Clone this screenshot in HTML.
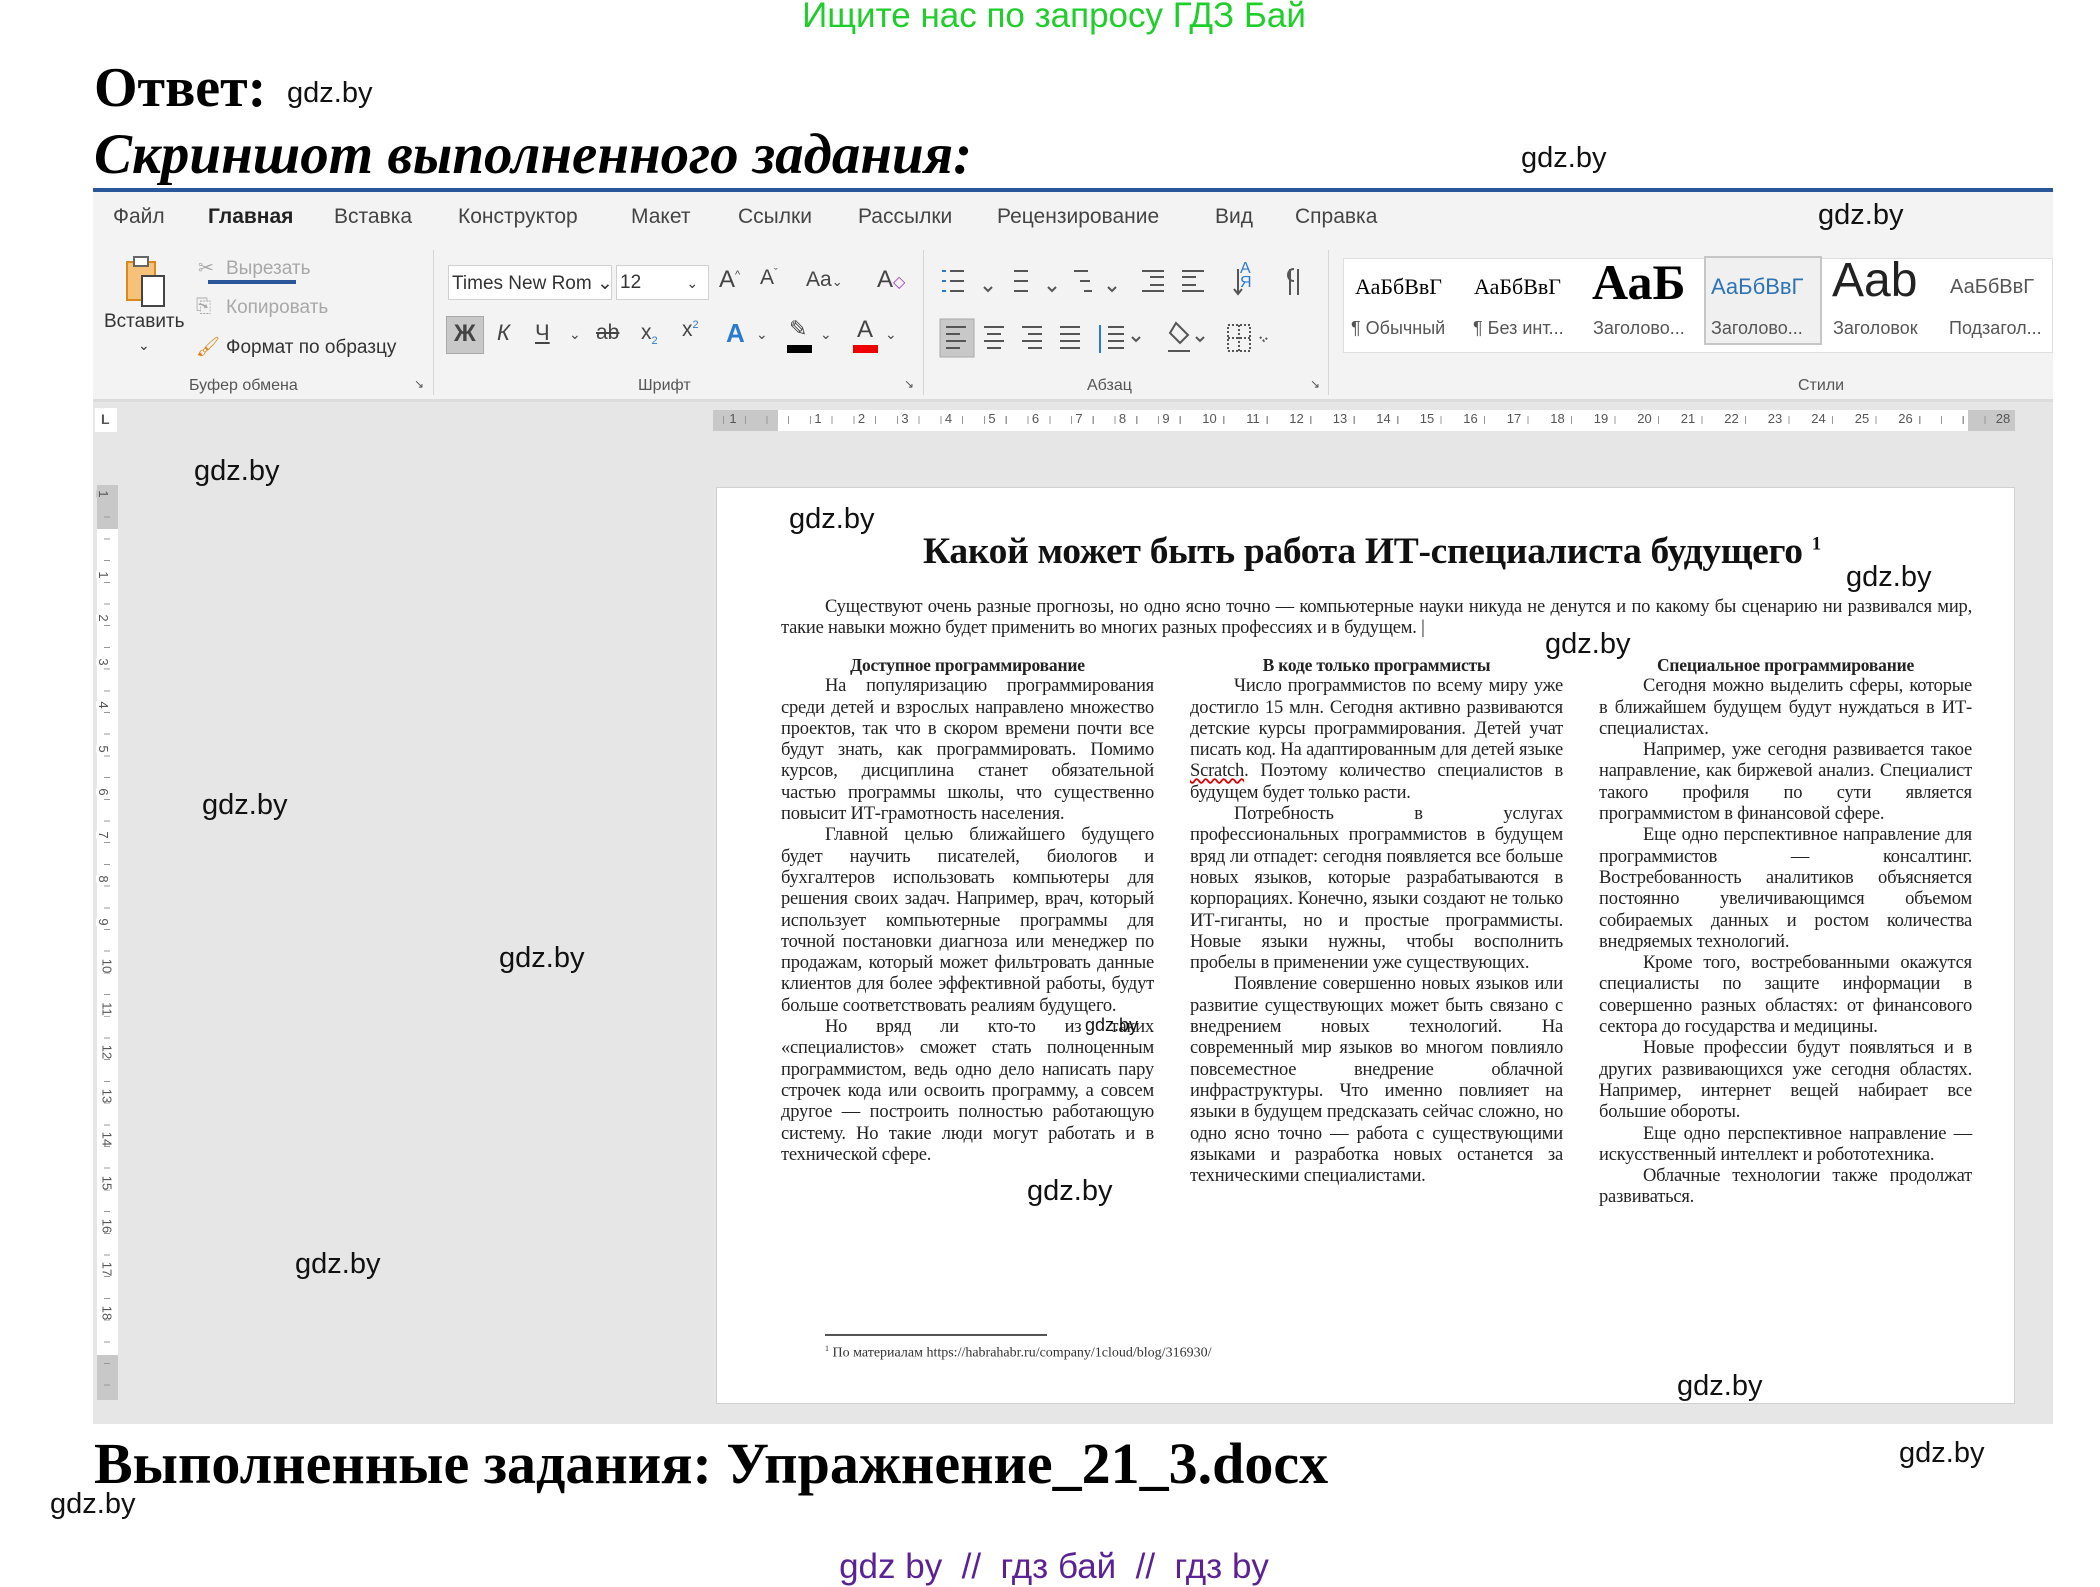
<!DOCTYPE html>
<html><head><meta charset="utf-8"><style>
*{margin:0;padding:0;box-sizing:border-box}
body{width:2100px;height:1583px;background:#fff;position:relative;overflow:hidden;font-family:"Liberation Sans","DejaVu Sans",sans-serif}
.a{position:absolute;white-space:nowrap}
.wm{position:absolute;font-family:"Liberation Sans",sans-serif;font-size:29px;color:#111;white-space:nowrap}
.serif{font-family:"Liberation Serif","DejaVu Serif",serif}
.tab{position:absolute;top:205px;font-size:21px;color:#444}
.rb{font-size:19px;color:#333}
.grey{color:#a8a8a8}
.gl{position:absolute;top:377px;font-size:16px;color:#555}
.sep{position:absolute;top:250px;width:1px;height:145px;background:#d6d6d6}
.col{position:absolute;top:655px;width:373px;font-family:"Liberation Serif",serif;font-size:18.5px;line-height:21.3px;text-align:justify;color:#222;letter-spacing:-0.2px}
.col h4{text-align:center;font-weight:bold;font-size:17.5px}
.col p{text-indent:44px}
.ic{position:absolute;font-size:24px;color:#444}
.rn{position:absolute;top:411px;font-size:13px;color:#555;transform:translateX(-50%)}
.vn{position:absolute;left:100px;font-size:13px;color:#555;transform:translateY(-50%) rotate(90deg)}
</style></head><body>

<div class="a" style="left:0;width:2108px;top:-4px;text-align:center;font-size:35px;color:#1fce2b">Ищите нас по запросу ГДЗ Бай</div>
<div class="a serif" style="left:94px;top:56px;font-size:56px;font-weight:bold">Ответ:</div>
<div class="wm" style="left:287px;top:77px">gdz.by</div>
<div class="a serif" style="left:94px;top:122px;font-size:57px;font-weight:bold;font-style:italic">Скриншот выполненного задания:</div>
<div class="wm" style="left:1521px;top:142px">gdz.by</div>

<div class="a" style="left:93px;top:188px;width:1960px;height:4px;background:#2b579a"></div>
<div class="a" style="left:93px;top:192px;width:1960px;height:209px;background:#f3f3f3"></div>
<div class="a" style="left:93px;top:399px;width:1960px;height:3px;background:#dcdcdc"></div>
<div class="a" style="left:93px;top:402px;width:1960px;height:1022px;background:#e6e6e6"></div>

<div class="tab" style="left:113px">Файл</div>
<div class="tab" style="left:208px;font-weight:bold;color:#222">Главная</div>
<div class="a" style="left:208px;top:280px;width:88px;height:4px;background:#2b579a"></div>
<div class="tab" style="left:334px">Вставка</div>
<div class="tab" style="left:458px">Конструктор</div>
<div class="tab" style="left:631px">Макет</div>
<div class="tab" style="left:738px">Ссылки</div>
<div class="tab" style="left:858px">Рассылки</div>
<div class="tab" style="left:997px">Рецензирование</div>
<div class="tab" style="left:1215px">Вид</div>
<div class="tab" style="left:1295px">Справка</div>
<div class="wm" style="left:1818px;top:199px">gdz.by</div>

<svg class="a" style="left:124px;top:254px" width="50" height="58"><rect x="3" y="8" width="28" height="38" fill="#f6c27a" stroke="#d88a1a" stroke-width="2"/><rect x="10" y="3" width="14" height="9" fill="#fff" stroke="#666" stroke-width="2"/><rect x="18" y="22" width="22" height="30" fill="#fff" stroke="#444" stroke-width="2"/></svg>
<div class="a rb" style="left:104px;top:311px">Вставить</div>
<div class="a rb" style="left:138px;top:337px;font-size:14px">⌄</div>
<div class="a rb grey" style="left:198px;top:257px">✂</div>
<div class="a rb grey" style="left:226px;top:258px">Вырезать</div>
<div class="a rb grey" style="left:196px;top:296px">⎘</div>
<div class="a rb grey" style="left:226px;top:297px">Копировать</div>
<div class="a rb" style="left:196px;top:335px;color:#d8861a">🖌</div>
<div class="a rb" style="left:226px;top:337px">Формат по образцу</div>
<div class="gl" style="left:189px">Буфер обмена</div>
<div class="gl" style="left:414px;font-size:12px">↘</div>
<div class="sep" style="left:433px"></div>

<div class="a" style="left:448px;top:265px;width:164px;height:35px;background:#fff;border:1px solid #d0d0d0;font-size:19px;padding:6px 3px;color:#333">Times New Rom ⌄</div>
<div class="a" style="left:616px;top:265px;width:93px;height:35px;background:#fff;border:1px solid #d0d0d0;font-size:19px;padding:6px 3px;color:#333">12 <span style="margin-left:40px;font-size:14px">⌄</span></div>
<div class="ic" style="left:719px;top:266px">A<sup style="font-size:11px">^</sup></div>
<div class="ic" style="left:760px;top:266px;font-size:21px">A<sup style="font-size:11px">ˇ</sup></div>
<div class="ic" style="left:806px;top:268px;font-size:21px">Aa<span style="font-size:13px">⌄</span></div>
<div class="ic" style="left:877px;top:266px">A<span style="color:#a23cc4;font-size:16px">◇</span></div>
<div class="a" style="left:446px;top:316px;width:38px;height:38px;background:#c8c8c8;border:1px solid #a8a8a8"></div>
<div class="ic" style="left:454px;top:320px;font-weight:bold">Ж</div>
<div class="ic" style="left:497px;top:320px;font-style:italic;font-size:22px">К</div>
<div class="ic" style="left:535px;top:320px;font-size:22px;text-decoration:underline">Ч</div>
<div class="ic" style="left:569px;top:326px;font-size:14px">⌄</div>
<div class="ic" style="left:596px;top:321px;font-size:21px;text-decoration:line-through">ab</div>
<div class="ic" style="left:641px;top:321px;font-size:21px">x<sub style="font-size:11px;color:#2a7bd0">2</sub></div>
<div class="ic" style="left:682px;top:318px;font-size:21px">x<sup style="font-size:11px;color:#2a7bd0">2</sup></div>
<div class="ic" style="left:726px;top:318px;color:#2a7bd0;font-weight:bold;font-size:26px">A</div>
<div class="ic" style="left:756px;top:326px;font-size:14px">⌄</div>
<div class="ic" style="left:789px;top:316px;font-size:22px">✎</div>
<div class="a" style="left:787px;top:345px;width:25px;height:8px;background:#000"></div>
<div class="ic" style="left:820px;top:326px;font-size:14px">⌄</div>
<div class="ic" style="left:857px;top:316px;font-size:24px">A</div>
<div class="a" style="left:853px;top:345px;width:25px;height:8px;background:#e00"></div>
<div class="ic" style="left:885px;top:326px;font-size:14px">⌄</div>
<div class="gl" style="left:638px">Шрифт</div>
<div class="gl" style="left:904px;font-size:12px">↘</div>
<div class="sep" style="left:923px"></div>

<svg class="a" style="left:938px;top:265px" width="380" height="95" fill="none" stroke="#555" stroke-width="2">
<g stroke="#2a7bd0"><path d="M4 6h4M4 16h4M4 26h4"/></g><path d="M12 6h14M12 16h14M12 26h14"/>
<path d="M46 22l4 4 4-4M76 6h14M76 16h14M76 26h14M110 22l4 4 4-4M136 6h14M142 16h10M146 26h8M170 22l4 4 4-4"/>
<path d="M204 6h22M212 12h14M212 20h14M204 26h22M244 6h22M244 12h14M244 20h14M244 26h22"/>
<path d="M300 4v24M296 24l4 5 4-5"/><path d="M352 4v26M360 4v26M356 4c-8 0-8 12 0 12"/>
<rect x="2" y="54" width="34" height="38" fill="#c8c8c8" stroke="#a8a8a8" stroke-width="1"/>
<path d="M8 62h20M8 69h14M8 76h20M8 83h14M46 62h20M49 69h14M46 76h20M49 83h14M84 62h20M90 69h14M84 76h20M90 83h14M122 62h20M122 69h20M122 76h20M122 83h20"/>
<path d="M162 60v28" stroke="#2a7bd0"/><path d="M170 62h16M170 69h16M170 76h16M170 83h16M194 72l4 4 4-4"/>
<path d="M238 58l12 12-8 8-10-10zM230 86h22M258 72l4 4 4-4"/>
<path d="M290 60h22v26h-22zM301 60v26M290 73h22M322 72l4 4 4-4" stroke-dasharray="2 2"/>
</svg>
<div class="ic" style="left:1240px;top:262px;font-size:16px;line-height:14px;color:#2a7bd0">А<br>Я</div>
<div class="gl" style="left:1087px">Абзац</div>
<div class="gl" style="left:1310px;font-size:12px">↘</div>
<div class="sep" style="left:1328px"></div>

<div class="a" style="left:1343px;top:258px;width:710px;height:95px;background:#fff;border:1px solid #dedede"></div>
<div class="a" style="left:1704px;top:256px;width:118px;height:89px;border:2px solid #c6c6c6;background:#f0f0f0"></div>
<div class="a serif" style="left:1355px;top:274px;font-size:22px">АаБбВвГ</div>
<div class="a serif" style="left:1474px;top:274px;font-size:22px">АаБбВвГ</div>
<div class="a serif" style="left:1592px;top:253px;font-size:50px;font-weight:bold">АаБ</div>
<div class="a" style="left:1711px;top:274px;font-size:22px;color:#2e74b5">АаБбВвГ</div>
<div class="a" style="left:1832px;top:253px;font-size:48px;color:#222">Aab</div>
<div class="a" style="left:1950px;top:276px;font-size:20px;color:#555">АаБбВвГ</div>
<div class="a" style="left:1351px;top:318px;font-size:18px;color:#555">¶ Обычный</div>
<div class="a" style="left:1473px;top:318px;font-size:18px;color:#555">¶ Без инт...</div>
<div class="a" style="left:1593px;top:318px;font-size:18px;color:#555">Заголово...</div>
<div class="a" style="left:1711px;top:318px;font-size:18px;color:#555">Заголово...</div>
<div class="a" style="left:1833px;top:318px;font-size:18px;color:#555">Заголовок</div>
<div class="a" style="left:1949px;top:318px;font-size:18px;color:#555">Подзагол...</div>
<div class="gl" style="left:1798px">Стили</div>

<div class="a" style="left:95px;top:408px;width:22px;height:24px;background:#fff;font-size:14px;font-weight:bold;color:#555;padding:3px 6px">L</div>
<div class="a" style="left:713px;top:410px;width:1302px;height:21px;background:#c8c8c8"></div>
<div class="a" style="left:778px;top:410px;width:1190px;height:21px;background:#fff"></div>
<div class="a" style="left:713px;top:416px;width:1302px;height:8px;background:repeating-linear-gradient(90deg,transparent 0 10px,#999 10px 11px,transparent 11px 21.75px)"></div>
<div id="hr"></div>
<div class="a" style="left:97px;top:485px;width:21px;height:915px;background:#fff"></div>
<div class="a" style="left:97px;top:485px;width:21px;height:44px;background:#c8c8c8"></div>
<div class="a" style="left:97px;top:1355px;width:21px;height:45px;background:#c8c8c8"></div>
<div class="a" style="left:104px;top:485px;width:6px;height:915px;background:repeating-linear-gradient(180deg,transparent 0 10px,#999 10px 11px,transparent 11px 21.7px)"></div>
<div id="vr"></div>
<script>
(function(){var h='';var xs=[[733,'1']];for(var n=1;n<=26;n++)xs.push([818+43.5*(n-1),''+n]);xs.push([2003,'28']);
xs.forEach(function(p){h+='<div class="rn" style="left:'+p[0]+'px;background:'+(p[0]<778||p[0]>1968?'#c8c8c8':'#fff')+';padding:0 3px">'+p[1]+'</div>'});
document.getElementById('hr').outerHTML=h;
var v='<div class="vn" style="top:494px;background:#c8c8c8">1</div>';for(var k=1;k<=18;k++)v+='<div class="vn" style="top:'+(575+43.4*(k-1))+'px;background:#fff">'+k+'</div>';
document.getElementById('vr').outerHTML=v;})();
</script>

<div class="a" style="left:716px;top:487px;width:1299px;height:917px;background:#fff;border:1px solid #d0d0d0"></div>
<div class="a serif" style="left:923px;top:530px;font-size:37.5px;font-weight:bold;color:#111;letter-spacing:-0.3px">Какой может быть работа ИТ-специалиста будущего <sup style="font-size:19px">1</sup></div>
<div class="a" style="left:781px;top:597px;width:1191px;font-family:'Liberation Serif',serif;font-size:18.5px;line-height:21.3px;text-align:justify;text-indent:44px;white-space:normal;color:#222;letter-spacing:-0.2px">Существуют очень разные прогнозы, но одно ясно точно — компьютерные науки никуда не денутся и по какому бы сценарию ни развивался мир, такие навыки можно будет применить во многих разных профессиях и в будущем. |</div>

<div class="col" style="left:781px"><h4>Доступное программирование</h4><p>На популяризацию программирования среди детей и взрослых направлено множество проектов, так что в скором времени почти все будут знать, как программировать. Помимо курсов, дисциплина станет обязательной частью программы школы, что существенно повысит ИТ-грамотность населения.</p><p>Главной целью ближайшего будущего будет научить писателей, биологов и бухгалтеров использовать компьютеры для решения своих задач. Например, врач, который использует компьютерные программы для точной постановки диагноза или менеджер по продажам, который может фильтровать данные клиентов для более эффективной работы, будут больше соответствовать реалиям будущего.</p><p>Но вряд ли кто-то из таких «специалистов» сможет стать полноценным программистом, ведь одно дело написать пару строчек кода или освоить программу, а совсем другое — построить полностью работающую систему. Но такие люди могут работать и в технической сфере.</p></div>
<div class="col" style="left:1190px"><h4>В коде только программисты</h4><p>Число программистов по всему миру уже достигло 15 млн. Сегодня активно развиваются детские курсы программирования. Детей учат писать код. На адаптированным для детей языке <u style="text-decoration-color:#d00;text-decoration-style:wavy">Scratch</u>. Поэтому количество специалистов в будущем будет только расти.</p><p>Потребность в услугах профессиональных программистов в будущем вряд ли отпадет: сегодня появляется все больше новых языков, которые разрабатываются в корпорациях. Конечно, языки создают не только ИТ-гиганты, но и простые программисты. Новые языки нужны, чтобы восполнить пробелы в применении уже существующих.</p><p>Появление совершенно новых языков или развитие существующих может быть связано с внедрением новых технологий. На современный мир языков во многом повлияло повсеместное внедрение облачной инфраструктуры. Что именно повлияет на языки в будущем предсказать сейчас сложно, но одно ясно точно — работа с существующими языками и разработка новых останется за техническими специалистами.</p></div>
<div class="col" style="left:1599px"><h4>Специальное программирование</h4><p>Сегодня можно выделить сферы, которые в ближайшем будущем будут нуждаться в ИТ-специалистах.</p><p>Например, уже сегодня развивается такое направление, как биржевой анализ. Специалист такого профиля по сути является программистом в финансовой сфере.</p><p>Еще одно перспективное направление для программистов — консалтинг. Востребованность аналитиков объясняется постоянно увеличивающимся объемом собираемых данных и ростом количества внедряемых технологий.</p><p>Кроме того, востребованными окажутся специалисты по защите информации в совершенно разных областях: от финансового сектора до государства и медицины.</p><p>Новые профессии будут появляться и в других развивающихся уже сегодня областях. Например, интернет вещей набирает все большие обороты.</p><p>Еще одно перспективное направление — искусственный интеллект и робототехника.</p><p>Облачные технологии также продолжат развиваться.</p></div>

<div class="a" style="left:825px;top:1334px;width:222px;height:2px;background:#555"></div>
<div class="a serif" style="left:825px;top:1344px;font-size:14px;color:#333"><sup style="font-size:8px">1</sup> По материалам https://habrahabr.ru/company/1cloud/blog/316930/</div>

<div class="a serif" style="left:94px;top:1430px;font-size:58px;font-weight:bold">Выполненные задания: Упражнение_21_3.docx</div>
<div class="a" style="left:0;width:2108px;top:1547px;text-align:center;font-size:35px;color:#5b2296">gdz by &nbsp;// &nbsp;гдз бай &nbsp;// &nbsp;гдз by</div>

<div class="wm" style="left:194px;top:455px">gdz.by</div>
<div class="wm" style="left:789px;top:503px">gdz.by</div>
<div class="wm" style="left:1846px;top:561px">gdz.by</div>
<div class="wm" style="left:1545px;top:628px">gdz.by</div>
<div class="wm" style="left:202px;top:789px">gdz.by</div>
<div class="wm" style="left:499px;top:942px">gdz.by</div>
<div class="wm" style="left:1085px;top:1015px;font-size:18px">gdz.by</div>
<div class="wm" style="left:1027px;top:1175px">gdz.by</div>
<div class="wm" style="left:295px;top:1248px">gdz.by</div>
<div class="wm" style="left:1677px;top:1370px">gdz.by</div>
<div class="wm" style="left:1899px;top:1437px">gdz.by</div>
<div class="wm" style="left:50px;top:1488px">gdz.by</div>
</body></html>
